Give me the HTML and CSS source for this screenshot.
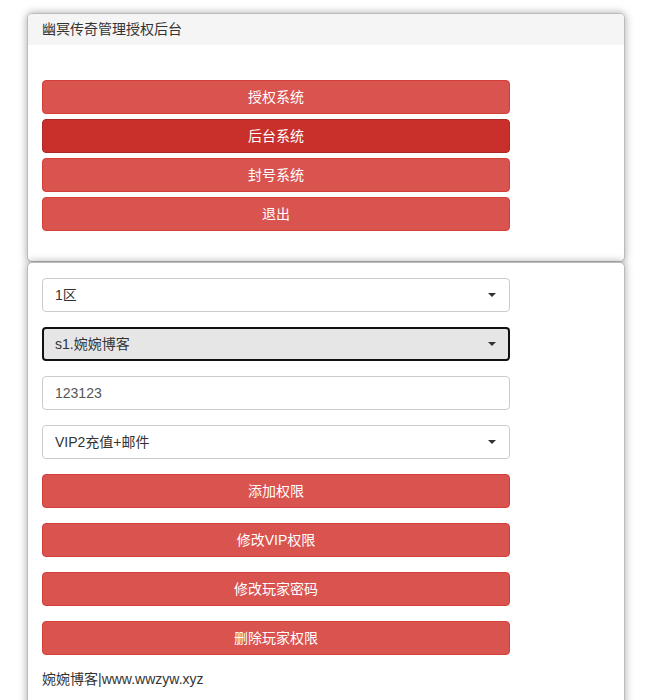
FILE: index.html
```html
<!DOCTYPE html>
<html lang="zh-CN">
<head>
<meta charset="utf-8">
<title>幽冥传奇管理授权后台</title>
<link rel="stylesheet" href="styles.css">
</head>
<body>
<div class="panel panel-top">
  <div class="panel-heading">幽冥传奇管理授权后台</div>
  <div class="panel-body nav-body">
    <button class="btn">授权系统</button>
    <button class="btn active">后台系统</button>
    <button class="btn">封号系统</button>
    <button class="btn">退出</button>
  </div>
</div>
<div class="panel panel-main">
  <div class="panel-body form-body">
    <div class="select-wrap"><select class="control"><option>1区</option></select></div>
    <div class="select-wrap"><select class="control focused"><option>s1.婉婉博客</option></select></div>
    <input class="control input" type="text" value="123123">
    <div class="select-wrap"><select class="control"><option>VIP2充值+邮件</option></select></div>
    <button class="btn">添加权限</button>
    <button class="btn">修改VIP权限</button>
    <button class="btn">修改玩家密码</button>
    <button class="btn">删除玩家权限</button>
    <div class="footer-text">婉婉博客|www.wwzyw.xyz</div>
  </div>
</div>
</body>
</html>
```

FILE: styles.css
```css
* { box-sizing: border-box; }
html, body { margin: 0; padding: 0; background: #fff; }
body {
  font-family: "Liberation Sans", "Noto Sans CJK SC", sans-serif;
  font-size: 14px;
  color: #333;
  padding-top: 13px;
}
.panel {
  width: 598px;
  margin-left: 27px;
  background: #fff;
  border: 1px solid #bbb;
  border-radius: 5px;
  box-shadow: 0 0 8px rgba(0,0,0,0.35);
  overflow: hidden;
}
.panel-main { margin-top: 0; height: 460px; }
.panel-heading {
  background: #f5f5f5;
  height: 31px;
  line-height: 30px;
  padding: 0 14px;
  color: #333;
  font-size: 14px;
}
.panel-body { padding: 0 14px; display: flex; flex-direction: column; align-items: flex-start; }
.nav-body { padding-top: 35px; padding-bottom: 30px; gap: 5px; }
.form-body { padding-top: 15px; gap: 15px; }
.btn {
  width: 468px;
  height: 34px;
  border: 1px solid #d43f3a;
  border-radius: 4px;
  background: #d9534f;
  color: #fff;
  font-family: inherit;
  font-size: 14px;
  padding: 0 0 2px;
  margin: 0;
}
.btn.active { background: #c9302c; border-color: #ac2925; }
.select-wrap { position: relative; width: 468px; height: 34px; }
.select-wrap::after {
  content: "";
  position: absolute;
  right: 14px;
  top: 15px;
  border-left: 4px solid transparent;
  border-right: 4px solid transparent;
  border-top: 4px solid #333;
  pointer-events: none;
}
.control {
  width: 468px;
  height: 34px;
  margin: 0;
  border: 1px solid #ccc;
  border-radius: 4px;
  background: #fff;
  color: #333;
  font-family: inherit;
  font-size: 14px;
  padding: 0 12px 1px;
  -webkit-appearance: none;
  appearance: none;
  outline: none;
}
.control.focused {
  background: #e6e6e6;
  border: 2px solid #111;
  padding: 0 11px 1px;
}
.input { color: #555; }
.footer-text { margin-top: -1px; color: #333; font-size: 14px; line-height: 20px; }
```
